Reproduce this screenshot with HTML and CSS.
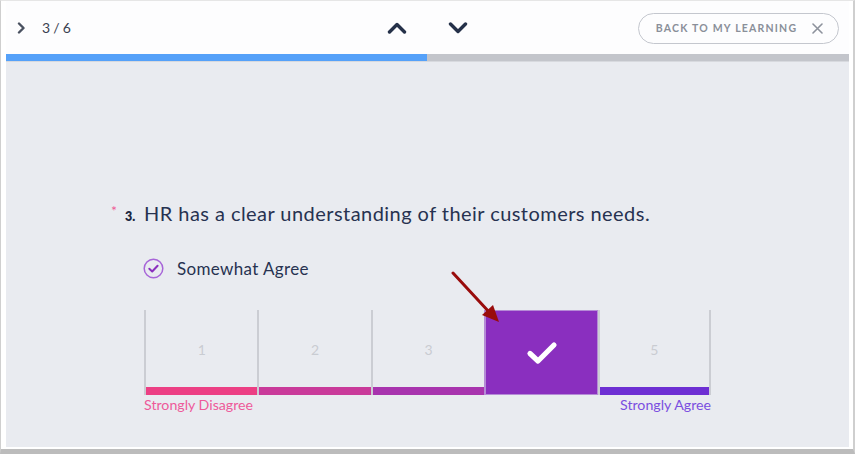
FILE: index.html
```html
<!DOCTYPE html>
<html lang="en">
<head>
<meta charset="utf-8">
<title>Survey question 3 of 6</title>
<link rel="stylesheet" href="styles.css">
</head>
<body>
<div class="shot">
  <div class="window">
    <header class="header">
      <div class="header-left">
        <svg class="chev-right" width="9" height="12" viewBox="0 0 9 12"><path d="M2 1.5 L6.5 6 L2 10.5" fill="none" stroke="#4a5160" stroke-width="2.4" stroke-linecap="round" stroke-linejoin="round"/></svg>
        <span class="counter">3 / 6</span>
      </div>
      <div class="header-nav">
        <svg width="20" height="12" viewBox="0 0 20 12"><path d="M2.5 10 L10 2.5 L17.5 10" fill="none" stroke="#253149" stroke-width="3.4" stroke-linecap="round" stroke-linejoin="round"/></svg>
        <svg width="20" height="12" viewBox="0 0 20 12"><path d="M2.5 2 L10 9.5 L17.5 2" fill="none" stroke="#253149" stroke-width="3.4" stroke-linecap="round" stroke-linejoin="round"/></svg>
      </div>
      <div class="header-right">
        <button class="back-btn">BACK TO MY LEARNING
          <svg width="11" height="11" viewBox="0 0 11 11"><path d="M1 1 L10 10 M10 1 L1 10" stroke="#8d929c" stroke-width="1.6" stroke-linecap="round"/></svg>
        </button>
      </div>
    </header>
    <div class="progress"><div class="progress-fill"></div></div>
    <main class="content">
      <div class="question">
        <span class="req">*</span>
        <span class="qnum">3.</span>
        <span class="qtext">HR has a clear understanding of their customers needs.</span>
      </div>
      <div class="answer">
        <svg class="answer-icon" width="21" height="21" viewBox="0 0 21 21"><circle cx="10.5" cy="10.5" r="9.3" fill="none" stroke="#a765d8" stroke-width="1.5"/><path d="M6.3 10.8 L9.2 13.5 L14.6 7.8" fill="none" stroke="#8a30be" stroke-width="2" stroke-linecap="round" stroke-linejoin="round"/></svg>
        <span>Somewhat Agree</span>
      </div>
      <div class="scale">
        <div class="opt"><span class="num">1</span><span class="bar c1"></span></div>
        <div class="opt"><span class="num">2</span><span class="bar c2"></span></div>
        <div class="opt"><span class="num">3</span><span class="bar c3"></span></div>
        <div class="opt selected"><svg width="32" height="24" viewBox="0 0 32 24"><path d="M4 12.5 L12 20 L28 4" fill="none" stroke="#ffffff" stroke-width="5.2" stroke-linecap="round" stroke-linejoin="round"/></svg></div>
        <div class="opt last"><span class="num">5</span><span class="bar c5"></span></div>
      </div>
      <div class="scale-labels">
        <span class="lab-left">Strongly Disagree</span>
        <span class="lab-right">Strongly Agree</span>
      </div>
    </main>
  </div>
  <svg class="arrow" width="60" height="60" viewBox="0 0 60 60"><line x1="3" y1="2" x2="40" y2="42" stroke="#990c0c" stroke-width="3" stroke-linecap="round"/><path d="M49 51 L32 44 L43 34 Z" fill="#990c0c"/></svg>
</div>
</body>
</html>
```

FILE: styles.css
```css
html, body {
  margin: 0;
  padding: 0;
  background: #ffffff;
}

body {
  font-family: Lato, "Open Sans", "Liberation Sans", sans-serif;
}

.shot {
  position: relative;
  width: 855px;
  height: 454px;
  box-sizing: border-box;
  border-top: 1px solid #e6e6e6;
  border-left: 1px solid #cfcfcf;
  border-right: 2px solid #cfcfcf;
  border-bottom: 5px solid #bcbcbc;
  padding: 0 4px 2px 5px;
  background: #ffffff;
}

.window {
  width: 843px;
  height: 446px;
  display: flex;
  flex-direction: column;
  background: #e9ebf0;
}

.header {
  height: 53px;
  background: #fdfdfe;
  display: grid;
  grid-template-columns: 1fr auto 1fr;
  align-items: center;
}

.header-left {
  display: flex;
  align-items: center;
  padding-left: 11px;
  gap: 16px;
}

.counter {
  font-size: 14px;
  color: #3a4150;
  letter-spacing: -0.2px;
}

.header-nav {
  display: flex;
  gap: 41px;
  align-items: center;
}

.header-right {
  display: flex;
  justify-content: flex-end;
  padding-right: 10px;
}

.back-btn {
  height: 31px;
  width: 201px;
  box-sizing: border-box;
  border: 1px solid #c4c7ce;
  border-radius: 16px;
  background: #fdfdfe;
  font-family: Lato, "Open Sans", sans-serif;
  font-size: 10.5px;
  font-weight: 700;
  letter-spacing: 1.2px;
  color: #8a8f99;
  display: flex;
  align-items: center;
  justify-content: center;
  gap: 15px;
  padding: 0 0 1px 2px;
  margin-top: 2px;
}

.progress {
  height: 7px;
  background: #c3c5cb;
  border-bottom: 1px solid #d7d9de;
}

.progress-fill {
  width: 421px;
  height: 100%;
  background: #55a1f9;
}

.content {
  flex: 1;
  padding: 138px 0 0 138px;
  color: #263149;
}

.question {
  display: flex;
  align-items: baseline;
  margin-left: -33px;
  height: 26px;
}

.req {
  width: 14px;
  color: #ef5a96;
  font-size: 14px;
  position: relative;
  top: -5px;
}

.qnum {
  width: 19px;
  font-size: 12.5px;
  font-weight: 800;
  color: #1d2740;
}

.qtext {
  font-size: 20px;
  letter-spacing: 0.45px;
  line-height: 26px;
  color: #273250;
}

.answer {
  margin-top: 32px;
  display: flex;
  align-items: center;
  gap: 13px;
  height: 21px;
  font-size: 17px;
  letter-spacing: 0.35px;
  color: #273250;
}

.answer-icon {
  margin-left: -1px;
}

.scale {
  margin-top: 31px;
  width: 567px;
  height: 85px;
  display: grid;
  grid-template-columns: repeat(5, 1fr);
}

.opt {
  border-left: 2px solid #cbcdd3;
  display: flex;
  flex-direction: column;
  align-items: stretch;
  position: relative;
}

.opt.last {
  border-right: 2px solid #cbcdd3;
}

.num {
  flex: 1;
  display: flex;
  align-items: center;
  justify-content: center;
  padding-top: 1px;
  font-size: 14px;
  color: #c9ccd2;
}

.bar {
  height: 8px;
}

.c1 { background: #ec3f84; }
.c2 { background: #c93a9a; }
.c3 { background: #a834ae; }
.c5 { background: #6d2fd3; }

.opt.selected {
  background: #8a2fbf;
  border-left: 2px solid #b58bd6;
  align-items: center;
  justify-content: center;
  outline: 1px solid #b58bd6;
  outline-offset: -1px;
}

.scale-labels {
  width: 567px;
  display: flex;
  justify-content: space-between;
  height: 20px;
  line-height: 20px;
  font-size: 14.2px;
}

.lab-left { color: #ee5a9a; }
.lab-right { color: #7b4fe0; }

.arrow {
  position: absolute;
  left: 449px;
  top: 270px;
}
```
